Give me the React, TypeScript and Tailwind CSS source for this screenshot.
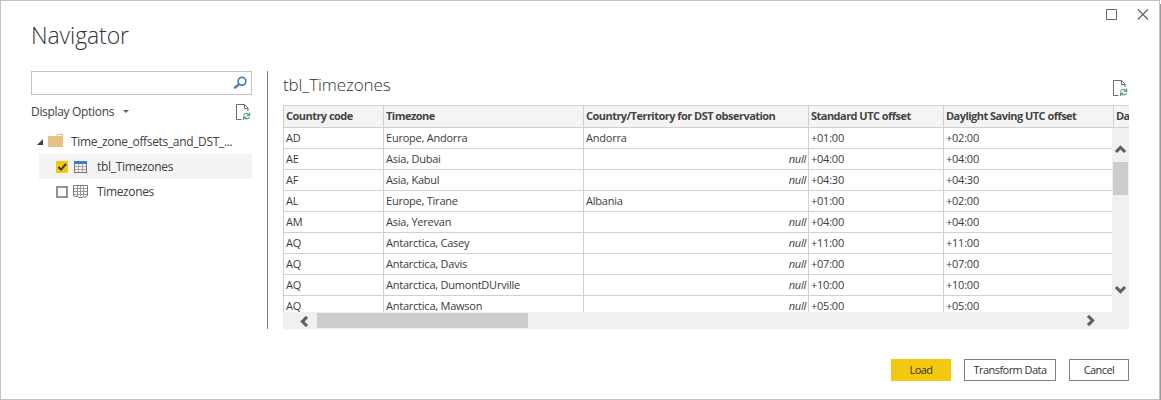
import React from "react";

type Row = { code: string; zone: string; territory: string | null; std: string; dst: string };

const rows: Row[] = [
  { code: "AD", zone: "Europe, Andorra", territory: "Andorra", std: "+01:00", dst: "+02:00" },
  { code: "AE", zone: "Asia, Dubai", territory: null, std: "+04:00", dst: "+04:00" },
  { code: "AF", zone: "Asia, Kabul", territory: null, std: "+04:30", dst: "+04:30" },
  { code: "AL", zone: "Europe, Tirane", territory: "Albania", std: "+01:00", dst: "+02:00" },
  { code: "AM", zone: "Asia, Yerevan", territory: null, std: "+04:00", dst: "+04:00" },
  { code: "AQ", zone: "Antarctica, Casey", territory: null, std: "+11:00", dst: "+11:00" },
  { code: "AQ", zone: "Antarctica, Davis", territory: null, std: "+07:00", dst: "+07:00" },
  { code: "AQ", zone: "Antarctica, DumontDUrville", territory: null, std: "+10:00", dst: "+10:00" },
  { code: "AQ", zone: "Antarctica, Mawson", territory: null, std: "+05:00", dst: "+05:00" },
];

function RefreshPageIcon() {
  return (
    <svg width="16" height="18" viewBox="0 0 16 18" fill="none" className="shrink-0">
      <path d="M5.5 16.5H.5V1.5H8.5L12 5V8" stroke="#6b6b6b" />
      <path d="M8.5 1.5V5.5H12" stroke="#6b6b6b" />
      <path d="M7.6 12.6C7.8 10.4 11 9.6 12.8 11.4M13.6 9.6V12.4H10.8" stroke="#5a9d7d" strokeWidth="1.2" />
      <path d="M13.5 13.8C13.1 15.8 10.3 16.6 8.4 15M7.6 17V14.1H10.4" stroke="#5a9d7d" strokeWidth="1.2" />
    </svg>
  );
}

function SearchIcon() {
  return (
    <svg width="14" height="14" viewBox="0 0 14 14" fill="none">
      <circle cx="9" cy="5.3" r="3.9" stroke="#4a7ebb" strokeWidth="1.7" />
      <path d="M6.2 8.1L1.2 12.2" stroke="#4a7ebb" strokeWidth="2.5" />
    </svg>
  );
}

function TableIcon() {
  return (
    <svg width="13" height="12" viewBox="0 0 13 12" fill="none" shapeRendering="crispEdges">
      <path d="M.5 3V11.5H12.5V3" stroke="#777" />
      <path d="M4.5 3V11M8.5 3V11M1 5.5H12M1 8.5H12" stroke="#aaa" />
      <path d="M0 0H13V3H0Z" fill="#3f7cc4" />
    </svg>
  );
}

function SheetIcon() {
  return (
    <svg width="15" height="13" viewBox="0 0 15 13" fill="none">
      <path d="M.5 10.5V.5H14.5V10.5" stroke="#777" />
      <path d="M4.5 1V11M7.5 1V11M10.5 1V11M1 3.5H14M1 6.5H14M1 9.5H14" stroke="#999" />
      <path d="M.5 10.5L2 11.5H4.5L6 12.5H9L10.5 11.5L12 12.5L14.5 10.5" stroke="#777" />
    </svg>
  );
}

function Chevron({ turn }: { turn: string }) {
  return (
    <svg width="12" height="12" viewBox="0 0 12 12" fill="none" className={turn}>
      <path d="M.9 9L5.5 4.4L10.1 9" stroke="#606060" strokeWidth="3.1" />
    </svg>
  );
}

function DataTable() {
  const head = "shrink-0 border-r border-[#d0d0d0] pl-0.5 whitespace-nowrap overflow-hidden";
  const cell = "shrink-0 border-r border-[#d0d0d0] pl-0.5";
  return (
    <div className="flex h-56 w-[846px] flex-col overflow-hidden text-[11px]">
      <div className="flex h-[23px] shrink-0 border-y border-l border-[#d0d0d0] bg-[#f4f4f4] font-bold leading-5 tracking-[-0.53px] text-[#444]">
        <div className={`${head} w-[100px]`}>Country code</div>
        <div className={`${head} w-[200px]`}>Timezone</div>
        <div className={`${head} w-[225px]`}>Country/Territory for DST observation</div>
        <div className={`${head} w-[135px]`}>Standard UTC offset</div>
        <div className={`${head} w-[170px]`}>Daylight Saving UTC offset</div>
        <div className="pl-0.5">Da</div>
      </div>
      <div className="flex h-[184px] shrink-0">
        <div className="h-full w-[829px] overflow-hidden border-l border-[#d0d0d0] leading-5 tracking-[-0.23px] text-[#3b3b3b]">
          {rows.map((r, i) => (
            <div key={i} className="flex h-[21px] border-b border-[#d0d0d0]">
              <div className={`${cell} w-[100px]`}>{r.code}</div>
              <div className={`${cell} w-[200px]`}>{r.zone}</div>
              <div className={`${cell} w-[225px]`}>
                {r.territory ?? <div className="pr-0.5 text-right italic">null</div>}
              </div>
              <div className={`${cell} w-[135px]`}>{r.std}</div>
              <div className="pl-0.5">{r.dst}</div>
            </div>
          ))}
        </div>
        <div className="flex w-[17px] flex-col items-center bg-[#f0f0f0] pt-[15px] pb-4">
          <Chevron turn="" />
          <div className="mt-[7px] h-[33px] w-[15px] bg-[#cdcdcd]" />
          <div className="mt-auto flex"><Chevron turn="-scale-y-100" /></div>
        </div>
      </div>
      <div className="flex h-[17px] shrink-0 items-center bg-[#f0f0f0] pl-[15px]">
        <Chevron turn="-rotate-90" />
        <div className="ml-[7px] h-[15px] w-[211px] bg-[#cdcdcd]" />
        <div className="mr-8 ml-auto"><Chevron turn="rotate-90" /></div>
      </div>
    </div>
  );
}

export default function App() {
  return (
    <div className="flex h-[400px] w-[1161px] bg-white font-['Open_Sans','Noto_Sans',sans-serif] text-[#404040]">
      <div className="flex flex-1 flex-col border border-[#c3c3c3]">
        <header className="flex h-[70px] shrink-0 justify-between pr-[10px] pl-[30px]">
          <h1 className="pt-[18px] text-[23px] leading-8 font-light tracking-[-0.1px] text-[#333]">Navigator</h1>
          <div className="flex gap-5 pt-2">
            <svg width="11" height="11" viewBox="0 0 11 11" fill="none" className="block">
              <path d="M.5 .5H10.5V10.5H.5Z" stroke="#666" />
            </svg>
            <svg width="12" height="12" viewBox="0 0 12 12" fill="none">
              <path d="M.8 .3L11 10.5M11 .3L.8 10.5" stroke="#666" strokeWidth="1.3" />
            </svg>
          </div>
        </header>
        <main className="flex h-[258px] shrink-0 pl-[30px]">
          <aside className="w-[221px] shrink-0 text-xs">
            <div className="flex h-6 items-center justify-end border border-[#c3c3c3] pr-1">
              <SearchIcon />
            </div>
            <div className="flex h-[34px] items-center justify-between">
              <div className="flex items-center tracking-[-0.32px]">
                Display Options
                <svg width="6" height="3" viewBox="0 0 6 3" className="ml-[9px] mb-0.5"><path d="M0 0H6L3 3Z" fill="#666" /></svg>
              </div>
              <RefreshPageIcon />
            </div>
            <div className="flex h-[25px] items-center pl-1.5">
              <svg width="6" height="6" viewBox="0 0 6 6"><path d="M6 0V6H0Z" fill="#404040" /></svg>
              <svg width="15" height="13" viewBox="0 0 15 13" className="mr-2 ml-[5px] mb-0.5">
                <path d="M0 2H8L9 0H15V13H0Z" fill="#e9c283" />
                <path d="M9.5 1H14V2H9Z" fill="#fff" />
              </svg>
              <span className="tracking-[-0.34px]">Time_zone_offsets_and_DST_...</span>
            </div>
            <div className="ml-2 flex h-[25px] items-center bg-[#f3f3f3] pl-[17px]">
              <svg width="12" height="12" viewBox="0 0 12 12" fill="none">
                <path d="M0 0H12V12H0Z" fill="#f2c811" />
                <path d="M2.4 6L5 8.6L10 3" stroke="#333" strokeWidth="1.9" />
              </svg>
              <div className="ml-1.5"><TableIcon /></div>
              <span className="ml-2.5 tracking-[-0.3px]">tbl_Timezones</span>
            </div>
            <div className="ml-2 flex h-[25px] items-center pl-[17px]">
              <div className="h-3 w-3 border-2 border-[#929292] bg-white" />
              <div className="ml-[5px]"><SheetIcon /></div>
              <span className="ml-[9px] tracking-[-0.36px]">Timezones</span>
            </div>
          </aside>
          <div className="ml-[15px] w-px shrink-0 bg-[#828282]" />
          <section className="ml-[15px] w-[846px] shrink-0">
            <div className="flex h-[34px] justify-between">
              <h2 className="text-[17px] leading-7 font-light tracking-[-0.1px] text-[#333]">tbl_Timezones</h2>
              <div className="pt-2"><RefreshPageIcon /></div>
            </div>
            <DataTable />
          </section>
        </main>
        <footer className="flex justify-end gap-[13px] pt-[30px] pr-[30px] text-[11px] text-[#333]">
          <button className="h-[22px] w-[60px] bg-[#f2c811] tracking-[-0.5px]">Load</button>
          <button className="h-[22px] w-[92px] border border-[#808080] tracking-[-0.55px]">Transform Data</button>
          <button className="h-[22px] w-[60px] border border-[#808080] tracking-[-0.55px]">Cancel</button>
        </footer>
      </div>
      <div className="mt-1 w-px bg-[#999]" />
    </div>
  );
}
